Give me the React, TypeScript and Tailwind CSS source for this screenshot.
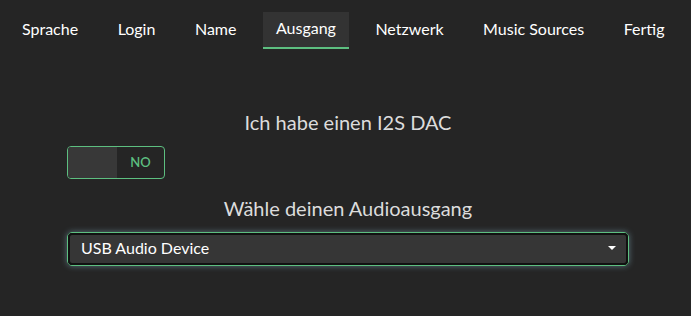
import { useState } from "react";

const TABS = ["Sprache", "Login", "Name", "Ausgang", "Netzwerk", "Music Sources", "Fertig"];

export default function App() {
  const [active] = useState("Ausgang");
  const [i2s, setI2s] = useState(false);

  return (
    <div className="min-h-[316px] w-full bg-[#252525] text-[#e8e8e8] font-['Lato',sans-serif]">
      {/* Tabs */}
      <nav className="flex gap-[13.5px] pl-[9px] pt-[12px]">
        {TABS.map((t) => (
          <div
            key={t}
            className={`h-[37px] px-[13px] pb-[3px] flex items-center text-[16px] leading-none ${
              t === active ? "bg-[#333333] border-b-2 border-[#5dbf80] text-white" : "text-white"
            }`}
          >
            {t}
          </div>
        ))}
      </nav>

      <div className="flex flex-col px-[67px] pr-[62px] pt-[61px]">
        <h2 className="text-center text-[20px] leading-[24px] text-[#dcdcdc]">Ich habe einen I2S DAC</h2>

        {/* Toggle */}
        <button
          onClick={() => setI2s(!i2s)}
          className="mt-[12px] w-[98px] h-[33px] flex rounded-[4px] border border-[#5dbf80] overflow-hidden"
        >
          <span className="w-[49px] h-full bg-[#383838]" />
          <span className="flex-1 h-full flex items-center justify-center text-[13px] font-semibold text-[#5dbf80]">
            {i2s ? "YES" : "NO"}
          </span>
        </button>

        <h2 className="mt-[17px] text-center text-[20px] leading-[24px] text-[#dcdcdc]">Wähle deinen Audioausgang</h2>

        {/* Select */}
        <div className="mt-[12px] h-[34px] rounded-[5px] border border-[#5dbf80] shadow-[0_0_6px_rgba(150,205,225,0.45)]">
          <div className="h-full rounded-[4px] border-2 border-[#111111] bg-[#363636] flex items-center justify-between pl-[11px] pr-[10px] pb-[2px]">
            <span className="text-[16px] text-white">USB Audio Device</span>
            <svg width="8" height="5" viewBox="0 0 8 5">
              <path d="M0 0 L8 0 L4 4 Z" fill="#ffffff" />
            </svg>
          </div>
        </div>
      </div>
    </div>
  );
}
